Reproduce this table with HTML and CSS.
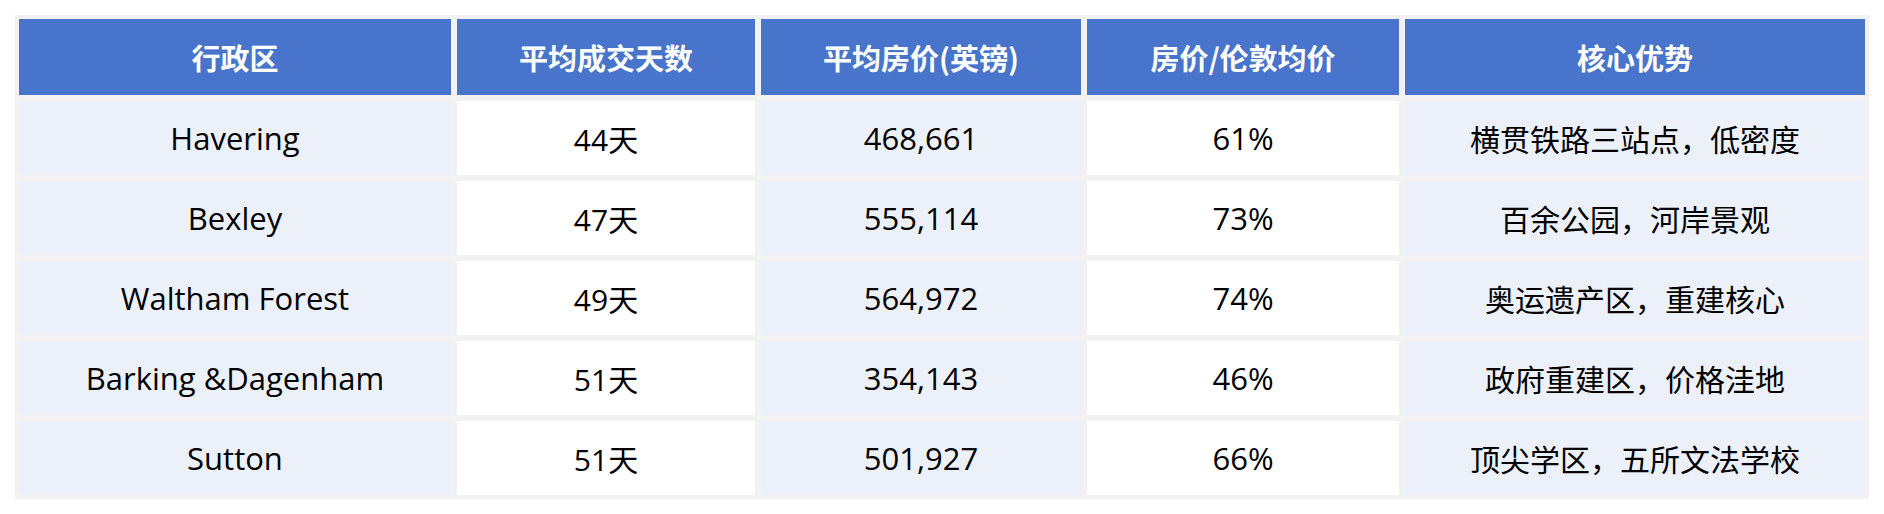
FILE: index.html
```html
<!DOCTYPE html>
<html lang="zh-CN">
<head>
<meta charset="utf-8">
<title>行政区</title>
<link rel="stylesheet" href="styles.css">
</head>
<body>
<div class="table">
  <div class="cell head">行政区</div>
  <div class="cell head">平均成交天数</div>
  <div class="cell head">平均房价(英镑)</div>
  <div class="cell head">房价/伦敦均价</div>
  <div class="cell head">核心优势</div>

  <div class="cell odd latin">Havering</div>
  <div class="cell even">44天</div>
  <div class="cell odd latin">468,661</div>
  <div class="cell even latin">61%</div>
  <div class="cell odd">横贯铁路三站点，低密度</div>

  <div class="cell odd latin">Bexley</div>
  <div class="cell even">47天</div>
  <div class="cell odd latin">555,114</div>
  <div class="cell even latin">73%</div>
  <div class="cell odd">百余公园，河岸景观</div>

  <div class="cell odd latin">Waltham Forest</div>
  <div class="cell even">49天</div>
  <div class="cell odd latin">564,972</div>
  <div class="cell even latin">74%</div>
  <div class="cell odd">奥运遗产区，重建核心</div>

  <div class="cell odd latin">Barking &amp;Dagenham</div>
  <div class="cell even">51天</div>
  <div class="cell odd latin">354,143</div>
  <div class="cell even latin">46%</div>
  <div class="cell odd">政府重建区，价格洼地</div>

  <div class="cell odd latin">Sutton</div>
  <div class="cell even">51天</div>
  <div class="cell odd latin">501,927</div>
  <div class="cell even latin">66%</div>
  <div class="cell odd">顶尖学区，五所文法学校</div>
</div>
</body>
</html>
```
FILE: styles.css
```css
html, body {
  margin: 0;
  padding: 0;
  background: #ffffff;
}
body {
  padding: 15px;
  font-family: "Open Sans", "Noto Sans CJK SC", sans-serif;
}
.table {
  display: grid;
  width: max-content;
  grid-template-columns: 432px 298px 320px 312px 460px;
  grid-template-rows: 76px repeat(5, 74px);
  gap: 6px;
  padding: 4px;
  background: #f2f2f2;
}
.cell {
  display: flex;
  align-items: center;
  justify-content: center;
  font-size: 30px;
  color: #000000;
  white-space: nowrap;
}
.latin {
  font-size: 31px;
}
.head {
  background: #4874cb;
  color: #ffffff;
  font-weight: bold;
  font-family: "Noto Sans CJK SC", sans-serif;
  font-size: 29px;
}
.odd {
  background: #ecf0f9;
}
.even {
  background: #ffffff;
}
```
